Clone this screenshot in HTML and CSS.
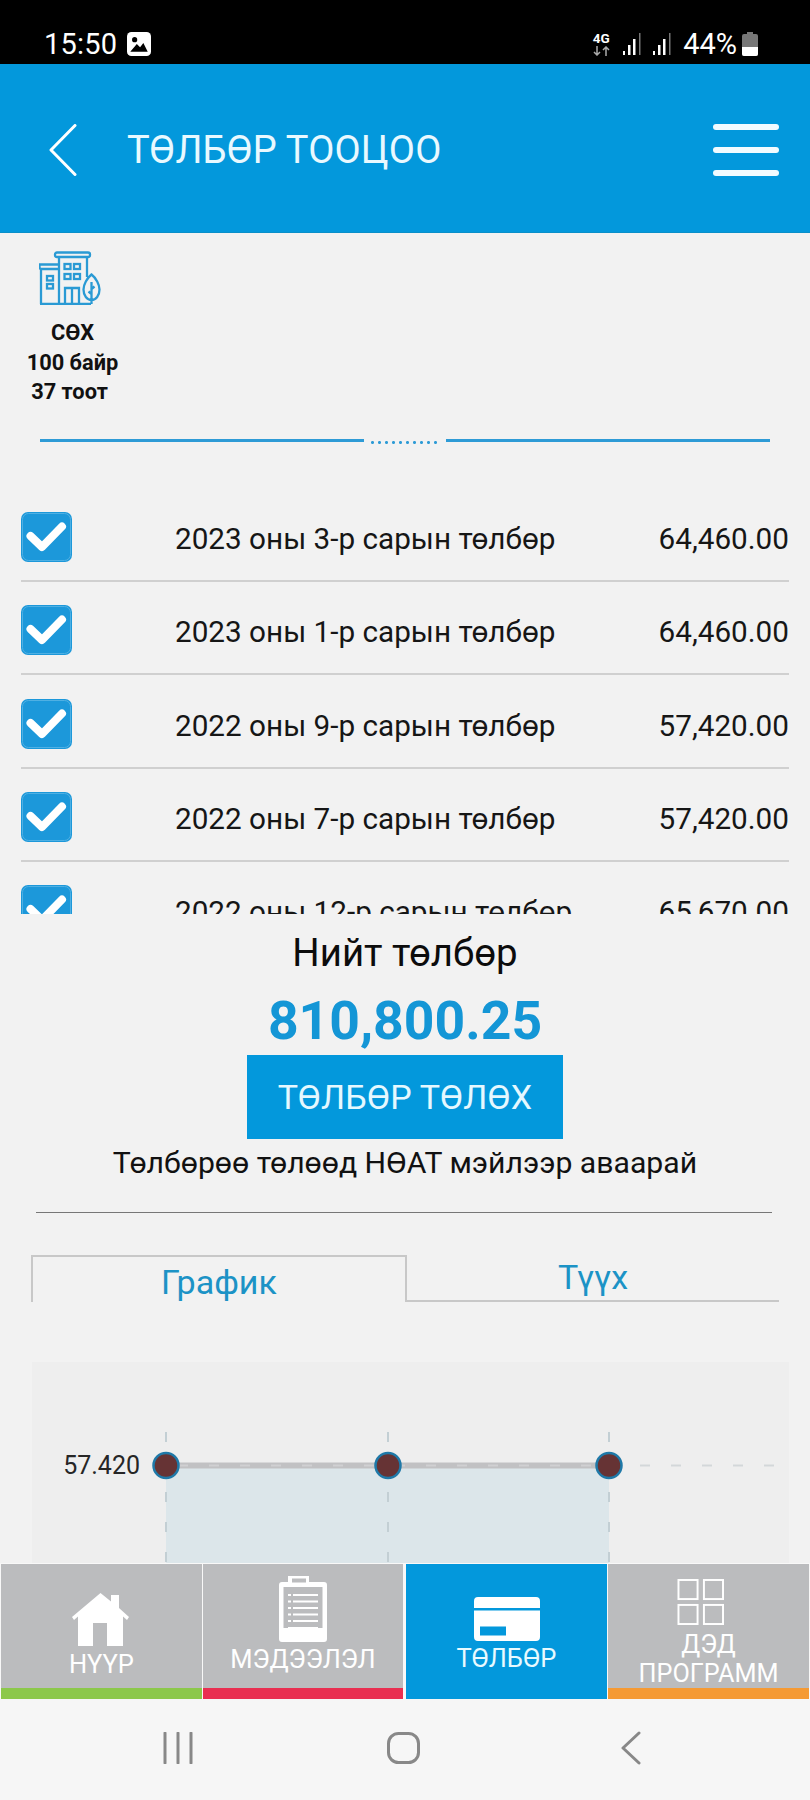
FILE: index.html
```html
<!DOCTYPE html>
<html lang="mn">
<head>
<meta charset="utf-8">
<title>Төлбөр тооцоо</title>
<link rel="stylesheet" href="styles.css">
</head>
<body>
<div class="screen">
  <div class="status">
    <span class="time">15:50</span>
    <svg class="st-img" viewBox="0 0 22 22"><rect width="22" height="22" rx="4" fill="#fff"/><circle cx="7" cy="7" r="2.4" fill="#000"/><path d="M3 18l6-7 3 3 3-4 4 8z" fill="#000"/></svg>
    <span class="st-right">
      <span class="net"><span class="net-g">4G</span><svg class="net-a" viewBox="0 0 19 10"><path d="M5 0v9M2 6l3 3 3-3M14 10V1M11 4l3-3 3 3" fill="none" stroke="#aaa" stroke-width="1.500"/></svg></span>
      <svg class="st-sig" viewBox="0 0 20 24"><path d="M1 19h2v4H1zM6 13h2.500v10H6zM11 7h2.500v16H11z" fill="#fff"/><path d="M17 1h1.500v22H17z" fill="#777"/></svg>
      <svg class="st-sig st-sig2" viewBox="0 0 20 24"><path d="M1 19h2v4H1zM6 13h2.500v10H6zM11 7h2.500v16H11z" fill="#fff"/><path d="M17 1h1.500v22H17z" fill="#777"/></svg>
      <span class="pct">44%</span>
      <svg class="st-bat" viewBox="0 0 16 24"><path d="M5 0h6v2h3a2 2 0 0 1 2 2v18a2 2 0 0 1-2 2H2a2 2 0 0 1-2-2V4a2 2 0 0 1 2-2h3z" fill="#777"/><path d="M0 15h16v7a2 2 0 0 1-2 2H2a2 2 0 0 1-2-2z" fill="#fff"/></svg>
    </span>
  </div>

  <header class="head">
    <svg class="back" viewBox="0 0 28 52"><path d="M26 1.500L2 26l24 24.500" fill="none" stroke="#fff" stroke-width="3" stroke-linecap="round" stroke-linejoin="round"/></svg>
    <h1 class="title">ТӨЛБӨР ТООЦОО</h1>
    <div class="burger"><span class="bar"></span><span class="bar"></span><span class="bar"></span></div>
  </header>

  <main class="main">
    <section class="info">
      <svg class="bld" viewBox="40 0 62 54" fill="none" stroke="#2a9ad4" stroke-width="2.300">
        <rect x="56" y="1.500" width="35" height="4.500" rx="2"/>
        <path d="M60 6v47M88 6v20M40.500 13.500h19.500v4.500H42.500a2 2 0 0 1-2-2zM42 18v35M41 53h51"/>
        <rect x="65.500" y="13" width="6" height="5"/><rect x="75" y="13" width="6" height="5"/>
        <rect x="65.500" y="23" width="6" height="5"/><rect x="75" y="23" width="6" height="5"/>
        <rect x="48" y="25" width="6" height="4.500"/><rect x="48" y="33" width="6" height="4.500"/>
        <path d="M66 53V37h14v16M73 37v16"/>
        <path d="M92.500 23.500c4.500 3.500 8 10 8 15 0 6-3.500 10.500-8 10.500s-8-4.500-8-10.500c0-5 3.500-11.500 8-15zM92.500 31v22M92.500 38l3-2.500M92.500 43l-3-2.500"/>
      </svg>
      <p class="info-line">СӨХ</p>
      <p class="info-line">100 байр</p>
      <p class="info-line info-shift">37 тоот</p>
    </section>

    <div class="rule">
      <span class="rule-line"></span>
      <span class="rule-dots"></span>
      <span class="rule-line"></span>
    </div>

    <ul class="list">
      <li class="row"><svg class="chk" viewBox="0 0 51 50"><rect width="51" height="50" rx="7" fill="#1c98da"/><rect x="1.500" y="1.500" width="48" height="47" rx="6" fill="none" stroke="#4fb0e3" stroke-width="1"/><path d="M9.500 24l11.500 11L41 14.500" fill="none" stroke="#fff" stroke-width="8" stroke-linecap="round" stroke-linejoin="round"/></svg><span class="row-name">2023 оны 3-р сарын төлбөр</span><span class="row-amt">64,460.00</span></li>
      <li class="row"><svg class="chk" viewBox="0 0 51 50"><rect width="51" height="50" rx="7" fill="#1c98da"/><rect x="1.500" y="1.500" width="48" height="47" rx="6" fill="none" stroke="#4fb0e3" stroke-width="1"/><path d="M9.500 24l11.500 11L41 14.500" fill="none" stroke="#fff" stroke-width="8" stroke-linecap="round" stroke-linejoin="round"/></svg><span class="row-name">2023 оны 1-р сарын төлбөр</span><span class="row-amt">64,460.00</span></li>
      <li class="row"><svg class="chk" viewBox="0 0 51 50"><rect width="51" height="50" rx="7" fill="#1c98da"/><rect x="1.500" y="1.500" width="48" height="47" rx="6" fill="none" stroke="#4fb0e3" stroke-width="1"/><path d="M9.500 24l11.500 11L41 14.500" fill="none" stroke="#fff" stroke-width="8" stroke-linecap="round" stroke-linejoin="round"/></svg><span class="row-name">2022 оны 9-р сарын төлбөр</span><span class="row-amt">57,420.00</span></li>
      <li class="row"><svg class="chk" viewBox="0 0 51 50"><rect width="51" height="50" rx="7" fill="#1c98da"/><rect x="1.500" y="1.500" width="48" height="47" rx="6" fill="none" stroke="#4fb0e3" stroke-width="1"/><path d="M9.500 24l11.500 11L41 14.500" fill="none" stroke="#fff" stroke-width="8" stroke-linecap="round" stroke-linejoin="round"/></svg><span class="row-name">2022 оны 7-р сарын төлбөр</span><span class="row-amt">57,420.00</span></li>
      <li class="row"><svg class="chk" viewBox="0 0 51 50"><rect width="51" height="50" rx="7" fill="#1c98da"/><rect x="1.500" y="1.500" width="48" height="47" rx="6" fill="none" stroke="#4fb0e3" stroke-width="1"/><path d="M9.500 24l11.500 11L41 14.500" fill="none" stroke="#fff" stroke-width="8" stroke-linecap="round" stroke-linejoin="round"/></svg><span class="row-name">2022 оны 12-р сарын төлбөр</span><span class="row-amt">65,670.00</span></li>
    </ul>

    <section class="summary">
      <p class="sum-label">Нийт төлбөр</p>
      <p class="sum-amt">810,800.25</p>
      <button class="pay" type="button">ТӨЛБӨР ТӨЛӨХ</button>
      <p class="sum-note">Төлбөрөө төлөөд НӨАТ мэйлээр аваарай</p>
    </section>

    <hr class="sep">

    <div class="tabs">
      <div class="tab tab-on">График</div>
      <div class="tab tab-off">Түүх</div>
    </div>

    <div class="chart">
      <svg class="chart-svg" viewBox="0 0 757 300">
        <rect x="134" y="106" width="443" height="194" fill="#dce6ea"/>
        <g stroke="#c3cfd4" stroke-width="2" stroke-dasharray="10 20">
          <path d="M134 70V300M356 70V300M577 70V300"/>
        </g>
        <path d="M134 103.500H577" stroke="#c1c1c3" stroke-width="6"/>
        <path d="M146 103.500H577" stroke="#d0d0d2" stroke-width="2" stroke-dasharray="10 21"/>
        <path d="M608 103.500H746" stroke="#d3d7d9" stroke-width="2" stroke-dasharray="10 21"/>
        <g fill="#663334" stroke="#1f79a8" stroke-width="2.500">
          <circle cx="134" cy="103.500" r="12.500"/>
          <circle cx="356" cy="103.500" r="12.500"/>
          <circle cx="577" cy="103.500" r="12.500"/>
        </g>
        <text class="chart-lbl" x="108" y="112" text-anchor="end">57.420</text>
      </svg>
    </div>
  </main>

  <nav class="nav">
    <a class="cell">
      <div class="cell-body body-home">
        <svg class="ic-home" viewBox="0 0 57 53"><path d="M28.500 0L39 8.500V2h8v13l10 9-2 3-4-3.500V53H35V30H21v23H6V23.500L2 27l-2-3z" fill="#fff"/></svg>
        <span class="lbl">НҮҮР</span>
      </div>
      <span class="strip strip-green"></span>
    </a>
    <a class="cell">
      <div class="cell-body body-doc">
        <svg class="ic-doc" viewBox="0 0 48 66"><path d="M9 0h21v6h9v0h6a3 3 0 0 1 3 3v54a3 3 0 0 1-3 3H3a3 3 0 0 1-3-3V9a3 3 0 0 1 3-3h6z" fill="#fff"/><rect x="13" y="2.500" width="14" height="4" fill="#bbbcbe"/><path d="M4.500 11h39v41H39v-1H9v1H4.500z" fill="#bbbcbe"/><path d="M14 19h25M14 25.500h25M14 32h25M14 38.500h25M14 45h25" stroke="#fff" stroke-width="2"/><path d="M9 19h3M9 25.500h3M9 32h3M9 38.500h3M9 45h3" stroke="#fff" stroke-width="2"/></svg>
        <span class="lbl">МЭДЭЭЛЭЛ</span>
      </div>
      <span class="strip strip-red"></span>
    </a>
    <a class="cell cell-on">
      <div class="cell-body body-card">
        <svg class="ic-card" viewBox="0 0 66 44"><path d="M4 0h58a4 4 0 0 1 4 4v7H0V4a4 4 0 0 1 4-4zM0 13.500h66V40a4 4 0 0 1-4 4H4a4 4 0 0 1-4-4z" fill="#fff"/><rect x="6" y="29.500" width="26" height="9" fill="#0398dc"/></svg>
        <span class="lbl">ТӨЛБӨР</span>
      </div>
    </a>
    <a class="cell">
      <div class="cell-body body-apps">
        <svg class="ic-apps" viewBox="0 0 47 47" fill="none" stroke="#fff" stroke-width="2"><rect x="1" y="1" width="19.500" height="19.500"/><rect x="27" y="1" width="19.500" height="19.500"/><rect x="1" y="26.500" width="19.500" height="19.500"/><rect x="27" y="26.500" width="19.500" height="19.500"/></svg>
        <span class="lbl lbl-two">ДЭД<br>ПРОГРАММ</span>
      </div>
      <span class="strip strip-orange"></span>
    </a>
  </nav>

  <div class="sysbar">
    <svg class="sys-ic sys-recent" viewBox="0 0 32 32"><path d="M3 1v30M16 1v30M29 1v30" stroke="#888" stroke-width="3" stroke-linecap="round"/></svg>
    <svg class="sys-ic sys-home" viewBox="0 0 33 32"><rect x="1.500" y="1.500" width="30" height="29" rx="10" fill="none" stroke="#888" stroke-width="3"/></svg>
    <svg class="sys-ic sys-back" viewBox="0 0 20 34"><path d="M18 2L2 17l16 15" fill="none" stroke="#888" stroke-width="3" stroke-linecap="round" stroke-linejoin="round"/></svg>
  </div>
</div>
</body>
</html>
```

FILE: styles.css
```css
* { box-sizing: border-box; }
html, body { margin: 0; padding: 0; }
body { font-family: Roboto, "Noto Sans", sans-serif; color: #000; background: #f2f2f2; }
p, h1, ul { margin: 0; padding: 0; }
.screen { width: 810px; height: 1800px; display: flex; flex-direction: column; overflow: hidden; background: #f2f2f2; }

/* status bar */
.status { height: 64px; flex: none; background: #000; color: #fff; display: flex; align-items: center; padding: 23px 52px 0 44px; }
.time { font-size: 29px; line-height: 32px; letter-spacing: .2px; }
.st-img { width: 24px; height: 24px; margin-left: 10px; }
.st-right { margin-left: auto; display: flex; align-items: center; }
.net { display: flex; flex-direction: column; align-items: center; width: 20px; }
.net-g { font-size: 13.500px; line-height: 13px; font-weight: 700; }
.net-a { width: 19px; height: 10px; display: block; margin-top: 1px; }
.st-sig { width: 20px; height: 24px; margin-left: 11px; }
.st-sig2 { margin-left: 10px; }
.pct { font-size: 29px; line-height: 32px; margin-left: 11px; }
.st-bat { width: 16px; height: 24px; margin-left: 5px; }

/* header */
.head { height: 169px; flex: none; background: #0398dc; display: flex; align-items: center; padding: 4px 31px 0 49px; border-bottom: 1px solid #0a8fc9; }
.back { width: 28px; height: 52px; }
.title { font-size: 38px; line-height: 44px; font-weight: 400; color: #e9f9ff; margin-left: 50px; letter-spacing: .2px; }
.burger { margin-left: auto; display: flex; flex-direction: column; gap: 17px; }
.bar { display: block; width: 66px; height: 6px; border-radius: 3px; background: #f2fbff; }

/* main */
.main { flex: 1; min-height: 0; overflow: hidden; }
.info { padding-top: 18px; width: 145px; display: flex; flex-direction: column; align-items: center; }
.bld { width: 62px; height: 54px; margin-right: 5px; margin-bottom: 13px; flex: none; }
.info-line { font-size: 21.800px; line-height: 29.500px; font-weight: 700; color: #111; white-space: nowrap; }
.info-shift { margin-right: 6px; }

.rule { display: flex; align-items: center; gap: 5px; margin: 30px 40px 0; height: 8px; }
.rule-line { flex: 1; height: 3px; background: #2e9bd6; }
.rule-dots { width: 72px; height: 3px; margin-top: 4px; background: radial-gradient(circle, #2e9bd6 1.3px, transparent 1.6px) 0 0 / 7px 3px repeat-x; }

.list { list-style: none; height: 401.500px; overflow: hidden; margin-top: 67.500px; padding: 0 21px; }
.row { display: flex; align-items: flex-start; height: 93.330px; position: relative; }
.row::after { content: ""; display: block; position: absolute; left: 0; right: 0; top: 68px; height: 2px; background: #d0d0d0; }
.chk { width: 51px; height: 50px; flex: none; }
.row-name { font-size: 29.700px; line-height: 54px; margin-left: 103px; color: #161616; white-space: nowrap; }
.row-amt { font-size: 29.700px; line-height: 54px; margin-left: auto; color: #161616; }

.summary { display: flex; flex-direction: column; align-items: center; }
.sum-label { font-size: 38.400px; line-height: 44px; margin-top: 17px; color: #0c0c0c; }
.sum-amt { font-size: 53.500px; line-height: 60px; margin-top: 16px; font-weight: 700; color: #1496d6; }
.pay { width: 316px; height: 84px; margin-top: 4px; border: 0; padding: 0; background: #0398dc; color: #e5f8ff; font-family: inherit; font-size: 34px; font-weight: 400; letter-spacing: .2px; }
.sum-note { font-size: 30.200px; line-height: 36px; margin-top: 6px; color: #111; white-space: nowrap; }

.sep { height: 1px; border: 0; margin: 31px 38px 0 36px; background: #777; }

.tabs { display: flex; margin: 42px 31px 0 31px; height: 47px; }
.tab { font-size: 34px; line-height: 50px; text-align: center; color: #1c93c6; }
.tab-on { width: 376px; border: 2px solid #c8c8c8; border-bottom: 0; }
.tab-off { flex: 1; border-bottom: 2px solid #c8c8c8; line-height: 45px; }

.chart { margin: 60px 21px 0 32px; height: 201px; background: #eeeeee; overflow: hidden; }
.chart-svg { display: block; width: 757px; height: 300px; }
.chart-lbl { font-family: Roboto, sans-serif; font-size: 25px; fill: #262626; }

/* bottom nav */
.nav { flex: none; height: 136px; display: flex; gap: 1px; padding: 1px 1px 0; background: #f8f8f8; }
.cell { flex: none; width: 201px; display: flex; flex-direction: column; background: #bbbcbe; color: #fff; }
.cell:nth-child(2) { width: 200px; }
.cell:nth-child(3) { margin-left: 2px; }
.cell-on { background: #0398dc; color: #e8faff; }
.cell-body { flex: 1; display: flex; flex-direction: column; align-items: center; min-height: 0; }
.strip { height: 11px; flex: none; }
.strip-green { background: #8cc84b; }
.strip-red { background: #e92f51; }
.strip-orange { background: #f59a34; }
.lbl { font-size: 25.500px; line-height: 28px; white-space: nowrap; text-align: center; }
.lbl-two { line-height: 29px; margin-top: 5px; font-size: 25.200px; }
.body-home { padding-top: 29px; }
.body-doc { padding-top: 12px; }
.body-card { padding-top: 33px; }
.body-apps { padding-top: 15px; }
.ic-home { width: 57px; height: 53px; margin-right: 2px; margin-bottom: 4px; }
.ic-doc { width: 48px; height: 66px; margin-bottom: 3px; }
.ic-card { width: 66px; height: 44px; margin-bottom: 3px; }
.ic-apps { width: 47px; height: 47px; margin-right: 16px; }

/* system nav */
.sysbar { flex: none; height: 101px; background: #f6f6f6; display: flex; padding-top: 33px; }
.sys-ic { flex: none; }
.sys-recent { width: 32px; height: 32px; margin-left: 162px; }
.sys-home { width: 33px; height: 32px; margin-left: 193px; }
.sys-back { width: 20px; height: 34px; margin-left: 201px; margin-top: -1px; }
```
